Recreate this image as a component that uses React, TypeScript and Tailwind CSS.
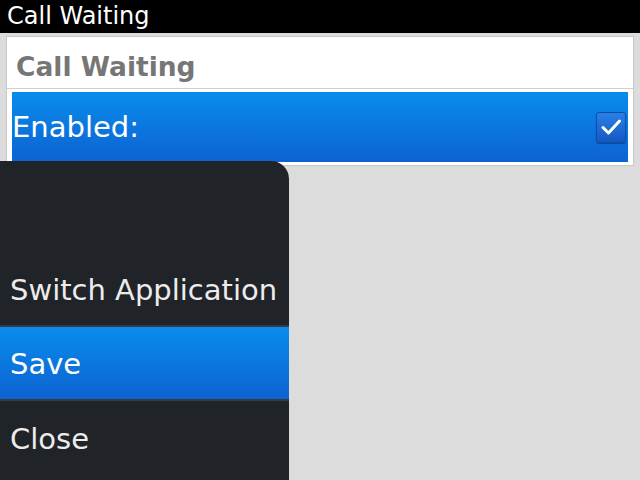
import React from 'react';

const font = { fontFamily: '"DejaVu Sans", Verdana, sans-serif' };

function CheckBox() {
  return (
    <div className="w-[30px] h-[31px] rounded-[3px] border border-[#0d4fa8] bg-gradient-to-b from-[#2b7fe6] to-[#1458c4] flex items-center justify-center shadow-[0_1px_1px_rgba(0,0,0,0.3)]">
      <svg width="22" height="18" viewBox="0 0 22 18" fill="none">
        <path d="M3 9.5 L8.5 15 L19.5 3" stroke="white" strokeWidth="3" strokeLinecap="round" strokeLinejoin="round" />
      </svg>
    </div>
  );
}

export default function App() {
  return (
    <div className="w-[640px] h-[480px] bg-[#dcdcdc] relative overflow-hidden" style={font}>
      {/* Title bar */}
      <div className="h-[33px] bg-black text-white text-[24px] leading-[33px] pl-[7px]">Call Waiting</div>

      {/* Settings panel */}
      <div className="mt-[3px] mx-[6px] w-[628px] bg-white border border-[#c8c8c8] pb-[3px]">
        <div className="h-[52px] border-b border-[#cfcfcf] flex items-center pl-[9px] pt-[9px] text-[26.5px] font-bold text-[#767676]">
          Call Waiting
        </div>
        <div className="mx-[5px] mt-[3px] h-[70px] bg-gradient-to-b from-[#0a8cec] to-[#0e62d2] flex items-center justify-between pr-[2px]">
          <span className="text-white text-[29px] pt-[1px]">Enabled:</span>
          <CheckBox />
        </div>
      </div>

      {/* Menu popup */}
      <div className="absolute left-0 top-[161px] w-[289px] h-[319px] bg-[#202327] rounded-tr-[18px] flex flex-col justify-end pb-[3px]">
        <div className="h-[72px] flex items-center pl-[10px] pt-[3px] text-[29px] text-[#ececec]">Switch Application</div>
        <div className="h-[2px] bg-[#363b42]" />
        <div className="h-[72px] flex items-center pl-[10px] pt-[3px] text-[29px] text-white bg-gradient-to-b from-[#0a8cec] to-[#0e62d2]">Save</div>
        <div className="h-[2px] bg-[#363b42]" />
        <div className="h-[76px] flex items-center pl-[10px] pt-[2px] text-[29px] text-[#ececec]">Close</div>
      </div>
    </div>
  );
}
